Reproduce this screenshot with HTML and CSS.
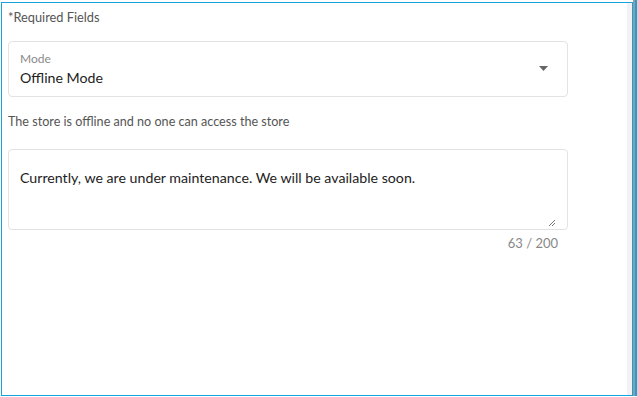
FILE: index.html
```html
<!DOCTYPE html>
<html lang="en">
<head>
    <meta charset="UTF-8">
    <title>Store Mode</title>
    <link rel="stylesheet" href="styles.css">
</head>
<body>
    <div class="window">
        <div class="panel">
            <div class="content">
                <p class="required">*Required Fields</p>

                <div class="select-field">
                    <div class="select-text">
                        <span class="select-label">Mode</span>
                        <span class="select-value">Offline Mode</span>
                    </div>
                    <svg class="select-arrow" width="9" height="5" viewBox="0 0 9 5">
                        <path d="M0 0 L9 0 L4.5 5 Z" fill="#666"/>
                    </svg>
                </div>

                <p class="helper">The store is offline and no one can access the store</p>

                <div class="textarea-field">
                    <p class="textarea-text">Currently, we are under maintenance. We will be available soon.</p>
                    <svg class="resize-handle" width="8" height="8" viewBox="0 0 8 8">
                        <path d="M7 1 L1 7 M7 4 L4 7" stroke="#777" stroke-width="1" fill="none"/>
                    </svg>
                </div>
                <div class="counter">63 / 200</div>
            </div>
            <div class="scroll-strip"></div>
        </div>
        <div class="edge"></div>
    </div>
</body>
</html>
```

FILE: styles.css
```css
* {
    margin: 0;
    padding: 0;
    box-sizing: border-box;
}

body {
    font-family: Lato, 'Liberation Sans', sans-serif;
    background: #fff;
    width: 637px;
    height: 397px;
    overflow: hidden;
}

/* Outer frame */
.window {
    display: flex;
    height: 397px;
    padding-top: 2px;
    padding-left: 1px;
    padding-bottom: 1px;
}

.panel {
    flex: 0 0 632px;
    display: flex;
    border: 1px solid #14a3dc;
    border-right: none;
}

.content {
    flex: 1;
    padding: 3px 0 0 6px;
}

.scroll-strip {
    width: 6px;
    background: #f2f2f6;
    border-right: 1px solid #14a3dc;
}

.edge {
    flex: 0 0 4px;
    border-left: 2px solid #9a9a9a;
    border-right: 2px solid #14a3dc;
    margin-top: -2px;
}

/* Form */
.required {
    font-size: 12.8px;
    line-height: 22px;
    color: #555;
}

.select-field {
    width: 560px;
    height: 56px;
    margin-top: 13px;
    border: 1px solid #e3e3e3;
    border-radius: 4px;
    display: flex;
    align-items: center;
    padding: 0 19px 0 11px;
}

.select-text {
    flex: 1;
    display: flex;
    flex-direction: column;
    gap: 2px;
}

.select-label {
    font-size: 12px;
    line-height: 15px;
    color: #8a8a8a;
}

.select-value {
    font-size: 14.2px;
    line-height: 19px;
    color: #222;
}

.select-arrow {
    margin-top: -2px;
}

.helper {
    font-size: 12.6px;
    line-height: 16px;
    color: #555;
    margin-top: 17px;
}

.textarea-field {
    position: relative;
    width: 560px;
    height: 81px;
    margin-top: 19px;
    border: 1px solid #e3e3e3;
    border-radius: 4px;
    padding: 18px 11px 0;
}

.textarea-text {
    font-size: 14.2px;
    line-height: 20px;
    color: #222;
}

.resize-handle {
    position: absolute;
    right: 11px;
    bottom: 2px;
}

.counter {
    width: 550px;
    text-align: right;
    font-size: 13px;
    line-height: 20px;
    margin-top: 3px;
    color: #888;
}
```
